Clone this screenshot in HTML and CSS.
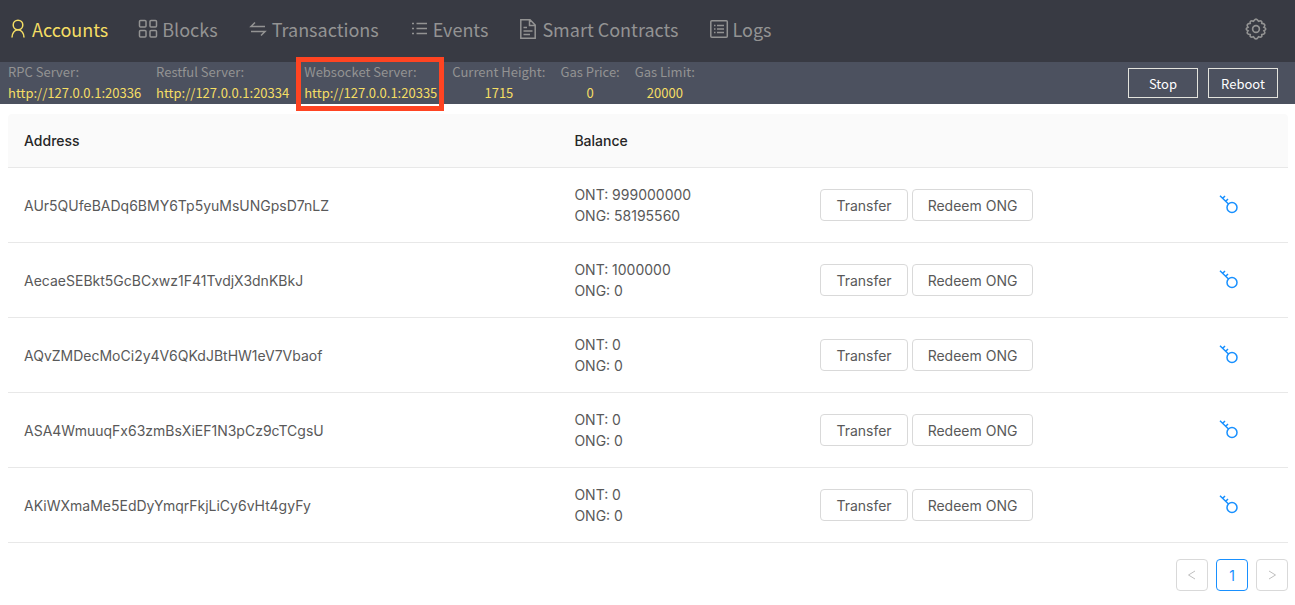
FILE: index.html
```
<!DOCTYPE html>
<html lang="en">
<head>
<meta charset="utf-8">
<title>Accounts</title>
<link rel="stylesheet" href="styles.css">
</head>
<body>
<svg class="sprite" aria-hidden="true">
  <symbol id="key" viewBox="0 0 20 20"><circle cx="13" cy="12.500" r="5"/><path d="M9.500 9 1 .800M3.500 3.500 6 1M6.500 6.500 9 4"/></symbol>
</svg>
<header class="topbar">
  <nav class="nav">
    <a class="nav-item active" href="#accounts"><svg viewBox="0 0 20 20"><circle cx="10" cy="6" r="4.800"/><path d="M4 18.500c0-4.200 2.400-7.700 6-7.700s6 3.500 6 7.700"/></svg>Accounts</a>
    <a class="nav-item" href="#blocks"><svg viewBox="0 0 20 20"><rect x="1.500" y="1.500" width="6.500" height="6.500" rx="1"/><rect x="12" y="1.500" width="6.500" height="6.500" rx="1"/><rect x="1.500" y="11.500" width="6.500" height="6.500" rx="1"/><rect x="12" y="11.500" width="6.500" height="6.500" rx="1"/></svg>Blocks</a>
    <a class="nav-item" href="#transactions"><svg viewBox="0 0 20 20"><path d="M7 3.500 3 7.500H17M3 12.500H17L13 16.500"/></svg>Transactions</a>
    <a class="nav-item" href="#events"><svg viewBox="0 0 20 20"><path d="M7.500 4.500H18M7.500 9.500H18M7.500 14.500H18M3 4.500H5M3 9.500H5M3 14.500H5"/></svg>Events</a>
    <a class="nav-item" href="#contracts"><svg viewBox="0 0 20 20"><path d="M2.800.800H12L17.200 6V19.200H2.800ZM11.500.800V6.500H17.200M5.500 8.500H9M5.500 12H14.500M5.500 15.500H12"/></svg>Smart Contracts</a>
    <a class="nav-item" href="#logs"><svg viewBox="0 0 20 20"><rect x="1.800" y="1.800" width="16.500" height="16.500" rx="1"/><path d="M8 6.500H15M8 10H15M8 13.500H15M5 6.500H6.500M5 10H6.500M5 13.500H6.500"/></svg>Logs</a>
  </nav>
  <button class="settings" type="button" aria-label="Settings"><svg class="icon-gear" viewBox="0 0 24 24"><circle cx="12" cy="12" r="3.700"/><path d="M9.300 3.500Q12-1.200 14.700 3.500 19.200 2.200 18.300 5.900 23.400 6.500 20.700 10 24.600 12 20.700 14 23.400 17.500 18.300 18.100 19.200 21.800 14.700 20.500 12 25.200 9.300 20.500 4.800 21.800 5.700 18.100.600 17.500 3.300 14-.600 12 3.300 10 .600 6.500 5.700 5.900 4.800 2.200 9.300 3.500Z"/></svg></button>
</header>
<section class="status">
  <dl class="stats">
    <div class="stat"><dt>RPC Server:</dt><dd>http://127.0.0.1:20336</dd></div>
    <div class="stat"><dt>Restful Server:</dt><dd>http://127.0.0.1:20334</dd></div>
    <div class="stat marked"><dt>Websocket Server:</dt><dd>http://127.0.0.1:20335</dd></div>
    <div class="stat centered"><dt>Current Height:</dt><dd>1715</dd></div>
    <div class="stat centered"><dt>Gas Price:</dt><dd>0</dd></div>
    <div class="stat centered"><dt>Gas Limit:</dt><dd>20000</dd></div>
  </dl>
  <div class="controls"><button type="button">Stop</button><button type="button">Reboot</button></div>
</section>
<main class="content">
  <table class="accounts">
    <colgroup><col class="col-address"><col class="col-balance"><col><col class="col-key"></colgroup>
    <thead><tr><th scope="col">Address</th><th scope="col">Balance</th><th></th><th></th></tr></thead>
    <tbody>
      <tr><td>AUr5QUfeBADq6BMY6Tp5yuMsUNGpsD7nLZ</td><td>ONT: 999000000<br>ONG: 58195560</td><td><div class="actions"><button type="button">Transfer</button><button type="button">Redeem ONG</button></div></td><td><button class="key" type="button" aria-label="Show key"><svg><use href="#key"/></svg></button></td></tr>
      <tr><td>AecaeSEBkt5GcBCxwz1F41TvdjX3dnKBkJ</td><td>ONT: 1000000<br>ONG: 0</td><td><div class="actions"><button type="button">Transfer</button><button type="button">Redeem ONG</button></div></td><td><button class="key" type="button" aria-label="Show key"><svg><use href="#key"/></svg></button></td></tr>
      <tr><td>AQvZMDecMoCi2y4V6QKdJBtHW1eV7Vbaof</td><td>ONT: 0<br>ONG: 0</td><td><div class="actions"><button type="button">Transfer</button><button type="button">Redeem ONG</button></div></td><td><button class="key" type="button" aria-label="Show key"><svg><use href="#key"/></svg></button></td></tr>
      <tr><td>ASA4WmuuqFx63zmBsXiEF1N3pCz9cTCgsU</td><td>ONT: 0<br>ONG: 0</td><td><div class="actions"><button type="button">Transfer</button><button type="button">Redeem ONG</button></div></td><td><button class="key" type="button" aria-label="Show key"><svg><use href="#key"/></svg></button></td></tr>
      <tr><td>AKiWXmaMe5EdDyYmqrFkjLiCy6vHt4gyFy</td><td>ONT: 0<br>ONG: 0</td><td><div class="actions"><button type="button">Transfer</button><button type="button">Redeem ONG</button></div></td><td><button class="key" type="button" aria-label="Show key"><svg><use href="#key"/></svg></button></td></tr>
    </tbody>
  </table>
  <nav class="pagination" aria-label="Pages">
    <button type="button" aria-label="Previous"><svg viewBox="0 0 10 10"><path d="M8 1 1.500 5 8 9"/></svg></button>
    <button class="current" type="button">1</button>
    <button type="button" aria-label="Next"><svg viewBox="0 0 10 10"><path d="M2 1 8.500 5 2 9"/></svg></button>
  </nav>
</main>
</body>
</html>
```
FILE: styles.css
```
* { box-sizing: border-box; }
body {
  margin: 0;
  background: #fff;
  color: #595959;
  font: 14px/21px Inter, "Liberation Sans", sans-serif;
}
button { font: inherit; color: inherit; cursor: pointer; }
svg { fill: none; stroke: currentColor; stroke-width: 1.5; }
.sprite { display: none; }

.topbar {
  display: flex;
  align-items: center;
  justify-content: space-between;
  height: 62px;
  padding: 0 28px 4px 8px;
  background: #383a43;
  color: #939393;
  font-family: "Noto Sans CJK SC", sans-serif;
}
.nav { display: flex; gap: 30px; }
.nav-item {
  display: flex;
  align-items: center;
  gap: 4px;
  color: inherit;
  font-size: 18px;
  line-height: 30px;
  text-decoration: none;
  white-space: nowrap;
}
.nav-item.active { color: #f5de64; }
.nav-item svg { width: 20px; height: 20px; }
.settings { display: flex; padding: 0; border: 0; background: none; }
.icon-gear { width: 22px; height: 22px; stroke-width: 1.8; }

.status {
  display: flex;
  justify-content: space-between;
  height: 42px;
  padding: 0 17px 0 8px;
  background: #4c515f;
  font: 13px/21px "Noto Sans CJK SC", sans-serif;
}
.stats { display: flex; gap: 15px; margin: -1px 0 0; }
.stat { position: relative; color: #939393; white-space: nowrap; }
.stat dd { margin: 0; color: #f5de64; }
.stat.centered { text-align: center; }
.stat.marked::after {
  content: "";
  position: absolute;
  inset: -4px -7px -7px -8px;
  border: 5px solid #ff4422;
}
.controls { display: flex; align-items: center; gap: 10px; }
.controls button {
  width: 70px;
  height: 30px;
  padding: 0;
  border: 1px solid #e3e3dd;
  background: none;
  color: #fff;
}

.content { padding: 10px 7px 14px 8px; }
.accounts { width: 100%; border-collapse: separate; border-spacing: 0; table-layout: fixed; }
.col-address { width: 43%; }
.col-balance { width: 246px; }
.col-key { width: 85px; }
.accounts th, .accounts td {
  padding: 16px;
  border-bottom: 1px solid #e8e8e8;
  text-align: left;
  vertical-align: middle;
}
.accounts th {
  height: 54px;
  background: #fafafa;
  color: #262626;
  font-weight: 500;
}
.accounts th:first-child { border-top-left-radius: 4px; }
.accounts th:last-child { border-top-right-radius: 4px; }
.accounts td { height: 75px; }
.actions { display: flex; gap: 4px; }
.actions button {
  height: 32px;
  padding: 0 15px;
  border: 1px solid #d9d9d9;
  border-radius: 4px;
  background: #fff;
  white-space: nowrap;
}
.key { display: flex; padding: 0; border: 0; background: none; color: #1890ff; }
.key svg { width: 20px; height: 20px; }

.pagination { display: flex; justify-content: flex-end; gap: 8px; margin-top: 16px; }
.pagination button {
  display: flex;
  align-items: center;
  justify-content: center;
  width: 32px;
  height: 32px;
  padding: 0;
  border: 1px solid #d9d9d9;
  border-radius: 4px;
  background: #fff;
  color: #bfbfbf;
}
.pagination .current { border-color: #1890ff; color: #1890ff; }
.pagination svg { width: 10px; height: 10px; stroke-width: 1; }
```
